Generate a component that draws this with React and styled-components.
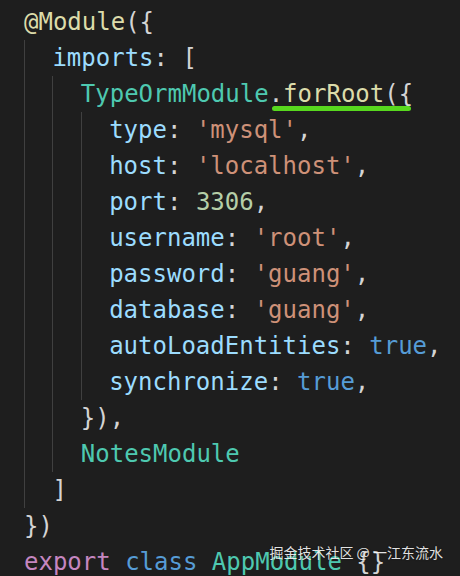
import React from 'react'
import styled, { createGlobalStyle } from 'styled-components'

const colors = {
  bg: '#1e1e1e',
  plain: '#d4d4d4',
  fn: '#dcdcaa',
  prop: '#9cdcfe',
  type: '#4ec9b0',
  str: '#ce9178',
  num: '#b5cea8',
  kw: '#569cd6',
  ctrl: '#c586c0',
  guide: '#404040',
  mark: '#58d81e'
}

const GlobalStyle = createGlobalStyle`
  html, body {
    margin: 0;
    padding: 0;
    background: ${colors.bg};
  }
`

const Editor = styled.div`
  position: relative;
  width: 460px;
  height: 576px;
  overflow: hidden;
  box-sizing: border-box;
  padding: 4px 0 0 24px;
  background: ${colors.bg};
  font-family: "DejaVu Sans Mono", "Liberation Mono", monospace;
  font-size: 24px;
  color: ${colors.plain};
`

const Line = styled.div`
  height: 36px;
  line-height: 36px;
  white-space: pre;
`

const Block = styled.div`
  border-left: 1.5px solid ${colors.guide};
  padding-left: calc(2ch - 1.5px);
`

const Tok = styled.span`
  color: ${({ c }) => colors[c] || colors.plain};
`

const Marked = styled.span`
  position: relative;

  &::after {
    content: '';
    position: absolute;
    left: 3px;
    right: 2px;
    bottom: -3px;
    height: 5px;
    border-radius: 3px;
    background: ${colors.mark};
  }
`

const Watermark = styled.div`
  position: absolute;
  right: 17px;
  bottom: 15px;
  font-family: "Noto Sans CJK SC", "Noto Sans", sans-serif;
  font-size: 14px;
  line-height: 18px;
  color: rgba(255, 255, 255, 0.88);
  text-shadow: 0 0 2px rgba(0, 0, 0, 0.4);
  white-space: pre;
`

const Prop = ({ name, children }) => (
  <Line>
    <Tok c='prop'>{name}</Tok>: {children},
  </Line>
)

const App = () => (
  <>
    <GlobalStyle />
    <Editor>
      <Line>
        <Tok c='fn'>@Module</Tok>({'{'}
      </Line>
      <Block>
        <Line>
          <Tok c='prop'>imports</Tok>: [
        </Line>
        <Block>
          <Line>
            <Tok c='type'>TypeOrmModule</Tok>
            <Marked>.<Tok c='fn'>forRoot</Tok>({'{'}</Marked>
          </Line>
          <Block>
            <Prop name='type'><Tok c='str'>'mysql'</Tok></Prop>
            <Prop name='host'><Tok c='str'>'localhost'</Tok></Prop>
            <Prop name='port'><Tok c='num'>3306</Tok></Prop>
            <Prop name='username'><Tok c='str'>'root'</Tok></Prop>
            <Prop name='password'><Tok c='str'>'guang'</Tok></Prop>
            <Prop name='database'><Tok c='str'>'guang'</Tok></Prop>
            <Prop name='autoLoadEntities'><Tok c='kw'>true</Tok></Prop>
            <Prop name='synchronize'><Tok c='kw'>true</Tok></Prop>
          </Block>
          <Line>{'}'}),</Line>
          <Line>
            <Tok c='type'>NotesModule</Tok>
          </Line>
        </Block>
        <Line>]</Line>
      </Block>
      <Line>{'})'}</Line>
      <Line>
        <Tok c='ctrl'>export</Tok> <Tok c='kw'>class</Tok> <Tok c='type'>AppModule</Tok> {'{}'}
      </Line>
      <Watermark>掘金技术社区 @ 一江东流水</Watermark>
    </Editor>
  </>
)

export default App
